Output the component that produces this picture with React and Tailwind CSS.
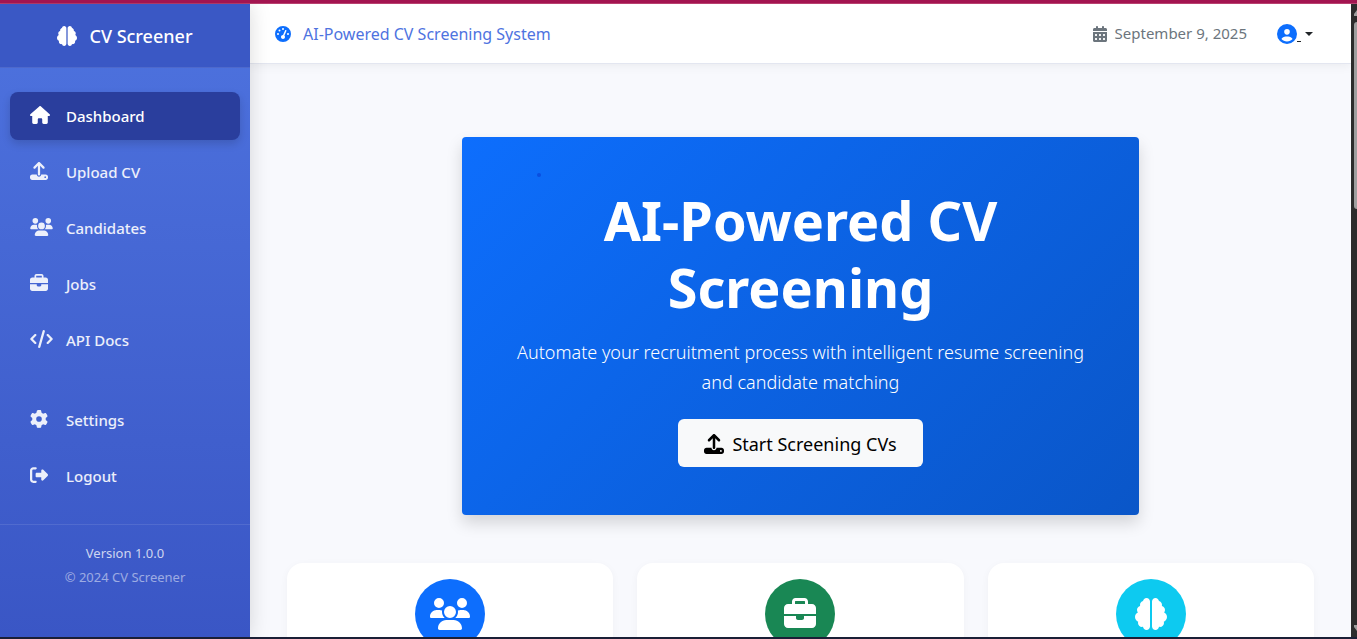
import {
  FaBrain,
  FaBriefcase,
  FaCalendarDays,
  FaCircleUser,
  FaCode,
  FaGaugeHigh,
  FaGear,
  FaHouse,
  FaRightFromBracket,
  FaUpload,
  FaUsers,
} from "react-icons/fa6";

const mainLinks = [
  { label: "Dashboard", icon: FaHouse, size: "w-5", active: true },
  { label: "Upload CV", icon: FaUpload, size: "w-[18px]" },
  { label: "Candidates", icon: FaUsers, size: "w-[23px]" },
  { label: "Jobs", icon: FaBriefcase, size: "w-[18px]" },
  { label: "API Docs", icon: FaCode, size: "w-[23px]" },
];

const accountLinks = [
  { label: "Settings", icon: FaGear, size: "w-[18px]" },
  { label: "Logout", icon: FaRightFromBracket, size: "w-[18px]" },
];

const features = [
  { name: "Candidates", icon: FaUsers, size: "w-10", color: "bg-[#0d6efd]" },
  { name: "Jobs", icon: FaBriefcase, size: "w-8", color: "bg-[#198754]" },
  { name: "AI analysis", icon: FaBrain, size: "w-8", color: "bg-[#0dcaf0]" },
];

function NavLink({ label, icon: Icon, size, active }) {
  return (
    <li>
      <a
        href="#"
        aria-current={active ? "page" : undefined}
        className={
          active
            ? "flex h-12 items-center rounded-lg bg-[#2a3e9d] px-5 text-white shadow-[0_4px_8px_rgba(0,0,0,0.15)]"
            : "flex h-12 items-center rounded-lg px-5 text-white/90"
        }
      >
        <span className="w-9 pb-0.5">
          <Icon className={`h-[18px] ${size}`} />
        </span>
        {label}
      </a>
    </li>
  );
}

function Sidebar() {
  return (
    <aside className="z-10 flex w-[250px] shrink-0 flex-col bg-linear-to-b from-[#4e73df] to-[#3a56c5] shadow-[0_0_20px_rgba(0,0,0,0.15)]">
      <div className="flex h-16 shrink-0 items-center justify-center gap-3 border-b border-white/10 bg-[#3a58c5] text-lg font-medium text-white">
        <FaBrain className="size-5" />
        CV Screener
      </div>
      <nav className="px-2.5 pt-6 text-[15px] font-medium">
        <ul className="flex flex-col gap-2">
          {mainLinks.map((link) => (
            <NavLink key={link.label} {...link} />
          ))}
        </ul>
        <ul className="mt-8 flex flex-col gap-2">
          {accountLinks.map((link) => (
            <NavLink key={link.label} {...link} />
          ))}
        </ul>
      </nav>
      <div className="mt-6 border-t border-white/10 pt-4 text-center text-[13px] leading-6">
        <p className="text-white/75">Version 1.0.0</p>
        <p className="text-white/50">© 2024 CV Screener</p>
      </div>
    </aside>
  );
}

function TopBar() {
  return (
    <header className="flex h-[60px] shrink-0 items-center justify-between border-b border-[#e3e6f0] bg-white pr-[38px] pl-[25px] shadow-[0_2px_10px_rgba(0,0,0,0.06)]">
      <div className="flex items-center gap-3 text-base text-[#4e73df]">
        <FaGaugeHigh className="size-4 text-[#0d6efd]" />
        AI-Powered CV Screening System
      </div>
      <div className="flex items-center">
        <FaCalendarDays className="mr-2 h-4 w-3.5 text-[#6c757d]" />
        <span className="text-[15px] text-[#6c757d]">September 9, 2025</span>
        <button type="button" aria-label="Account menu" className="ml-[30px] flex items-center">
          <FaCircleUser className="size-5 text-[#0d6efd]" />
          <span className="mt-4 h-px w-1 bg-[#212529]" />
          <svg viewBox="0 0 8 4" className="ml-1 h-1 w-2" fill="#212529">
            <path d="M0 0h8L4 4z" />
          </svg>
        </button>
      </div>
    </header>
  );
}

function Hero() {
  return (
    <section className="relative rounded bg-linear-135 from-[#0d6efd] to-[#0a56c8] px-12 pt-[50px] pb-12 text-center text-white shadow-[0_8px_16px_rgba(0,0,0,0.15)]">
      <span className="absolute top-9 left-[75px] size-1 rounded-full bg-[#0a4fe0]" />
      <h1 className="mb-4 text-[54px] leading-[67px] font-bold">AI-Powered CV Screening</h1>
      <p className="mb-[22px] text-lg leading-[30px] font-light">
        Automate your recruitment process with intelligent resume screening and candidate matching
      </p>
      <a
        href="#"
        className="inline-flex h-12 items-center gap-2 rounded-md bg-[#f8f9fa] px-[26px] pt-0.5 text-lg text-black"
      >
        <FaUpload className="size-5" />
        Start Screening CVs
      </a>
    </section>
  );
}

export default function App() {
  return (
    <div className="flex h-screen flex-col overflow-hidden border-t-3 border-b-2 border-t-[#a31550] border-b-[#1a1f36] font-['Noto_Sans',sans-serif]">
      <div className="flex min-h-0 flex-1 border-t border-[#b9406f]">
        <Sidebar />
        <div className="flex min-w-0 flex-1 flex-col overflow-hidden bg-[#f8f9fd]">
          <TopBar />
          <main className="px-[37px] pt-[73px]">
            <div className="-mx-3 flex justify-center">
              <div className="w-2/3 px-3">
                <Hero />
              </div>
            </div>
            <div className="mt-12 grid grid-cols-3 gap-6">
              {features.map(({ name, icon: Icon, size, color }) => (
                <article
                  key={name}
                  aria-label={name}
                  className="flex h-48 justify-center rounded-2xl bg-white pt-4 shadow-[0_2px_8px_rgba(0,0,0,0.04)]"
                >
                  <div
                    className={`flex size-[70px] items-center justify-center rounded-full text-white ${color}`}
                  >
                    <Icon className={`h-8 ${size}`} />
                  </div>
                </article>
              ))}
            </div>
          </main>
        </div>
        <div className="flex w-1.5 shrink-0 flex-col items-end justify-between bg-[#2c2c2c] py-1.5">
          <div className="flex flex-col items-end gap-1.5">
            <svg viewBox="0 0 3 6" className="h-1.5 w-[3px]" fill="#9f9f9f">
              <path d="M3 0v6H0V4z" />
            </svg>
            <div className="h-[187px] w-[3px] rounded-l bg-[#9f9f9f]" />
          </div>
          <svg viewBox="0 0 3 6" className="h-1.5 w-[3px]" fill="#9f9f9f">
            <path d="M0 0h3v6L0 2z" />
          </svg>
        </div>
      </div>
    </div>
  );
}
